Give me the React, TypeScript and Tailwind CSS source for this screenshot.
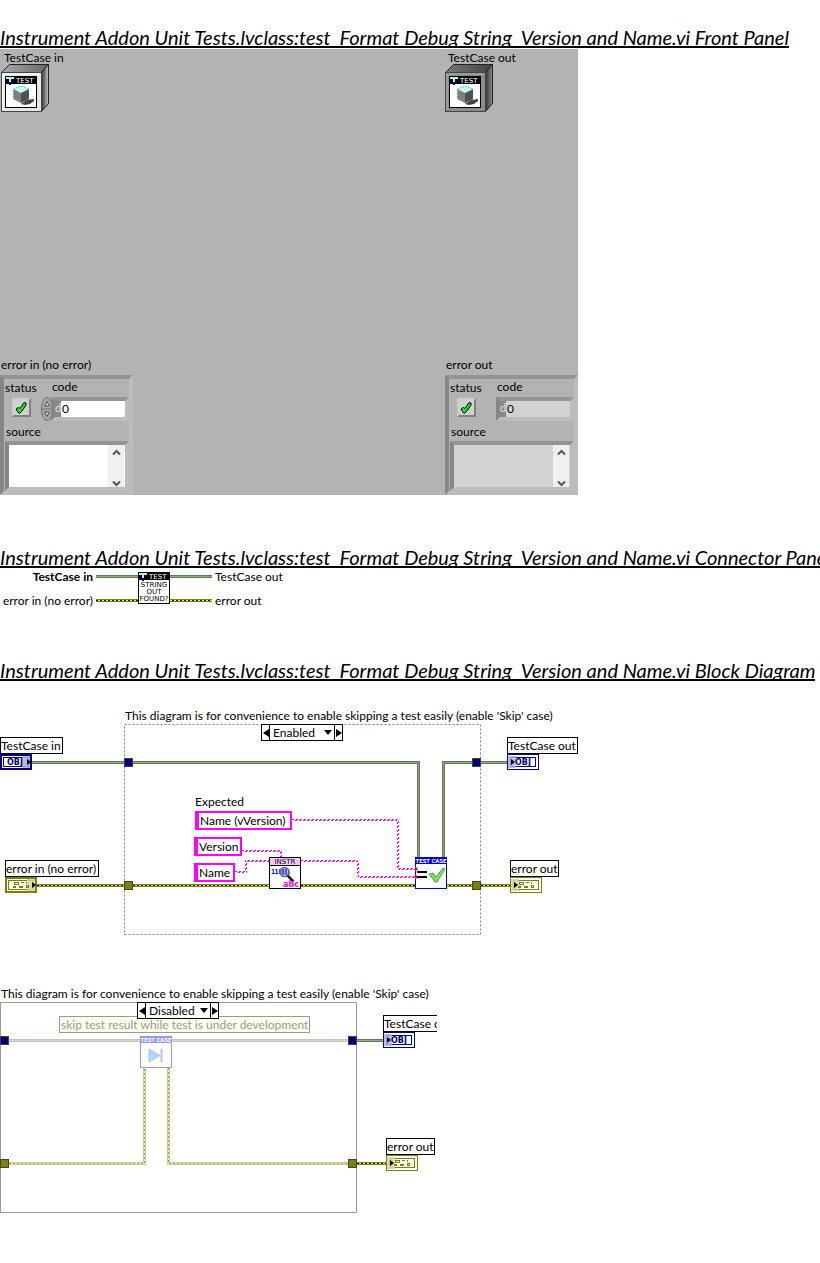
import type { ReactNode } from "react";

const NAVY = "#000080";
const OLIVE = "#808000";
const PINK = "#ff00ff";

function Heading({ children }: { children: ReactNode }) {
  return (
    <h2 className="h-6 w-fit overflow-hidden border-b-2 border-black font-[Lato,sans-serif] text-[20px] leading-[27px] whitespace-nowrap italic">
      {children}
    </h2>
  );
}

/* ---------- Icons ---------- */

function TestBanner() {
  return (
    <g>
      <rect x="0" y="0" width="32" height="8" fill="#000" />
      <path d="M1 1h8v2H6v3H4V3H1z" fill="#b4f0f8" />
      <rect x="4" y="6" width="2" height="3" fill="#0000d0" />
      <text x="11" y="7" fontSize="7" fill="#fff" fontFamily="DejaVu Sans">
        TEST
      </text>
    </g>
  );
}

function ObjectCube({ dark = false }: { dark?: boolean }) {
  const face = dark ? "#8c8c8c" : "#e6e6e6";
  const id = dark ? "cube-dark" : "cube-light";
  return (
    <svg width="48" height="48" viewBox="0 0 48 48" aria-hidden="true">
      <defs>
        <linearGradient id={`${id}-top`} x1="0" x2="1">
          <stop offset="0" stopColor={dark ? "#777" : "#aaa"} />
          <stop offset="1" stopColor={dark ? "#444" : "#666"} />
        </linearGradient>
        <linearGradient id={`${id}-side`} x1="0" x2="1">
          <stop offset="0" stopColor="#333" />
          <stop offset="1" stopColor={dark ? "#8a8a8a" : "#c4c4c4"} />
        </linearGradient>
      </defs>
      <path d="M.5 8.500 8.500.5h39l-7 8z" fill={`url(#${id}-top)`} stroke="#222" />
      <path d="M40.500 8.500l7-8v39l-7 8z" fill={`url(#${id}-side)`} stroke="#222" />
      <rect x=".5" y="8.500" width="40" height="39" fill={face} stroke="#444" />
      <path d="M2 46V10h37" fill="none" stroke={dark ? "#aaa" : "#fff"} />
      <g transform="translate(4 12)">
        <rect x=".5" y=".5" width="31" height="31" fill="#fff" stroke="#000" />
        <TestBanner />
        <path d="M16 28l6-4 7-1v2l-4 3-5 1z" fill="#444" />
        <path d="M8 13l8-3 8 3v10l-8 4-8-4z" fill="#808080" />
        <path d="M16 17l8-4v10l-8 4z" fill="#505050" />
        <path d="M8 13l8-3 8 3-8 4z" fill="#c0fafa" />
        <path d="M8.500 23V13L16 10l7.500 3" fill="none" stroke="#78c8d0" strokeDasharray="2 1" />
      </g>
    </svg>
  );
}

function StringOutIcon() {
  return (
    <g>
      <rect x=".5" y=".5" width="31" height="31" fill="#fff" stroke="#000" />
      <TestBanner />
      <g fontSize="7" textAnchor="middle" fontFamily="DejaVu Sans" fill="#000">
        <text x="16" y="15">STRING</text>
        <text x="16" y="22">OUT</text>
        <text x="16" y="29">FOUND?</text>
      </g>
    </g>
  );
}

function InstrIcon() {
  return (
    <g>
      <rect x=".5" y=".5" width="31" height="31" fill="#fff" stroke="#000" />
      <rect x="1" y="1" width="30" height="7" fill="#ffc8ff" />
      <rect x="1" y="8" width="30" height="1" fill="#000" />
      <text x="16" y="7" fontSize="7" textAnchor="middle" fontFamily="DejaVu Sans">INSTR</text>
      <text x="2" y="17" fontSize="7" fill="#0000e0" fontFamily="Liberation Sans" fontWeight="bold">11001</text>
      <circle cx="15.500" cy="15" r="4.500" fill="#a0b4f0" fillOpacity=".6" stroke="#666" strokeWidth="1.500" />
      <path d="M14 12v6M17 12v6" stroke="#0000ff" />
      <path d="M18.500 18.500l6 6" stroke="#222" strokeWidth="2.500" />
      <text x="14" y="30" fontSize="8" fontWeight="bold" fill={PINK} fontFamily="DejaVu Sans">abc</text>
    </g>
  );
}

function TestCaseFrame() {
  return (
    <g>
      <rect x=".5" y=".5" width="31" height="31" fill="#fff" stroke="#0000c0" />
      <rect width="32" height="7" fill="#0000c0" />
      <text x="16" y="6" fontSize="6" fontWeight="bold" textAnchor="middle" fill="#fff" fontFamily="Roboto">
        TEST CASE
      </text>
    </g>
  );
}

function AssertIcon() {
  return (
    <g>
      <TestCaseFrame />
      <path d="M0 9l3 3-3 3zM0 17l3 3-3 3z" fill="#f00" />
      <path d="M2 15h10M2 20h10" stroke="#000" strokeWidth="2" />
      <path d="M14 17l4-1 3 4 7-9 2 1-8 13h-2z" fill="#7be05a" stroke="#3c8c3c" strokeWidth=".8" />
    </g>
  );
}

function SkipIcon() {
  return (
    <g opacity=".4">
      <TestCaseFrame />
      <path d="M9 13l11 6.500L9 26z" fill="#3c9cf8" stroke="#2878d0" />
      <path d="M21.500 13v13" stroke="#2878d0" strokeWidth="2" />
    </g>
  );
}

/* ---------- Wires, tunnels and terminals ---------- */

function ClassWire({ d, faded }: { d: string; faded?: boolean }) {
  return (
    <g fill="none" opacity={faded ? 0.4 : 1}>
      <path d={d} stroke="#587c58" strokeWidth="3" />
      <path d={d} stroke="#98a880" strokeWidth="1" />
    </g>
  );
}

function ErrorWire({ d, faded }: { d: string; faded?: boolean }) {
  return (
    <g fill="none" opacity={faded ? 0.4 : 1}>
      <path d={d} stroke={OLIVE} strokeWidth="3" />
      <path d={d} stroke="#ffff00" strokeWidth="1" />
      <path d={d} stroke="#000" strokeWidth="1" strokeDasharray="2 2" />
    </g>
  );
}

function StringWire({ d }: { d: string }) {
  return (
    <g fill="none" stroke={PINK} strokeDasharray="2 2">
      <path d={d} />
      <path d={d} strokeDashoffset="2" transform="translate(1 1)" />
    </g>
  );
}

function Tunnel({ x, y, fill }: { x: number; y: number; fill: string }) {
  return <rect x={x + 0.5} y={y + 0.5} width="8" height="8" fill={fill} stroke="#444434" />;
}

function Terminal({ x, y, kind, input }: { x: number; y: number; kind: "obj" | "error"; input?: boolean }) {
  const color = kind === "obj" ? NAVY : OLIVE;
  const tint = kind === "obj" ? "#b0b0dc" : "#d4d4a8";
  return (
    <g transform={`translate(${x} ${y})`}>
      <rect width="32" height="16" fill={color} />
      {input ? (
        <rect x="2" y="2" width="28" height="12" fill="#fff" />
      ) : (
        <rect x="1" y="1" width="30" height="14" fill="#fff" />
      )}
      <rect x="3.500" y="3.500" width="25" height="9" fill="none" stroke={color} />
      <rect x={input ? 22 : 1} y="2" width="8" height="12" fill={tint} fillOpacity=".85" />
      {kind === "obj" ? (
        <text x={input ? 7 : 8} y="11" fontSize="8" fontWeight="bold" fill={color} fontFamily="DejaVu Sans">
          OBJ
        </text>
      ) : (
        <g fill="none" stroke={color}>
          <rect x="9.500" y="5.500" width="4" height="2" />
          <path d="M16 5.500h3M21.500 5v2M8 9.500h3M8 10.500h3M14 9.500h4M14 10.500h4" />
          <rect x="21.500" y="8.500" width="2" height="2" />
        </g>
      )}
      <path d={input ? "M27 5v6l4-3z" : "M4 5v6l4-3z"} fill="#000" />
    </g>
  );
}

/* ---------- Front panel ---------- */

function StatusLight({ id }: { id: string }) {
  return (
    <span className="relative ml-[7px] block size-[19px]">
      <input
        id={id}
        type="checkbox"
        defaultChecked
        className="block size-[19px] appearance-none border-2 border-t-[#cccccc] border-r-[#808080] border-b-[#808080] border-l-[#cccccc] bg-[#d0d0d0]"
      />
      <svg className="pointer-events-none absolute inset-0" width="19" height="19" viewBox="0 0 19 19" aria-hidden="true">
        <path d="M4.500 10.500l2-1 1.500 1 4-6 2 .5v2l-4 6-2 2h-1.500l-2-3z" fill="#00f000" stroke="#000" />
      </svg>
    </span>
  );
}

function Spinner() {
  return (
    <svg width="12" height="24" viewBox="0 0 12 24" aria-hidden="true">
      <ellipse cx="6" cy="12" rx="5.500" ry="11.500" fill="#a8a8a8" stroke="#707070" />
      <path d="M1 12h10" stroke="#707070" />
      <path d="M3.500 9L6 4.500 8.500 9zM3.500 15L6 19.500 8.500 15z" fill="#d4d4d4" stroke="#505050" />
    </svg>
  );
}

const bevel =
  "border-4 border-t-[#949494] border-l-[#868686] border-r-[#bcbcbc] border-b-[#bcbcbc]";

function ErrorCluster({ id, title, input }: { id: string; title: string; input?: boolean }) {
  const field = input ? "bg-white" : "bg-[#d2d2d2]";
  return (
    <fieldset className="w-[133px]">
      <legend className="h-[18px] pl-px leading-4">{title}</legend>
      <div className={`${bevel} pl-px`}>
        <div className="flex">
          <div className="w-9">
            <label htmlFor={`${id}-status`} className="block h-[19px] leading-[18px]">
              status
            </label>
            <StatusLight id={`${id}-status`} />
          </div>
          <div className="flex-1">
            <label htmlFor={`${id}-code`} className="block h-[18px] pl-[11px] leading-4">
              code
            </label>
            <div className="flex h-6 items-center">
              <div className="w-[10px] flex-none">{input && <Spinner />}</div>
              <div className={`${bevel} flex h-6 flex-1`}>
                <span className="w-[6px] flex-none bg-[#888888] text-[11px] leading-[14px] text-[#e0e0e0]">d</span>
                <input
                  id={`${id}-code`}
                  defaultValue="0"
                  readOnly={!input}
                  className={`${field} h-4 w-0 flex-1 pb-[2px] pl-px leading-[14px] outline-none`}
                />
              </div>
            </div>
          </div>
        </div>
        <label htmlFor={`${id}-source`} className="block h-5 pl-px leading-[22px]">
          source
        </label>
        <div className={`${bevel} flex h-[50px]`}>
          <textarea
            id={`${id}-source`}
            readOnly={!input}
            className={`${field} w-0 flex-1 resize-none outline-none`}
          />
          <div className={`flex ${field} pr-px`}>
            <div className="flex w-4 flex-col items-center justify-between bg-[#f0f0f0] pt-1">
              <svg width="9" height="7" viewBox="0 0 9 7" aria-hidden="true">
                <path d="M1 5.500l3.500-3.500L8 5.500" fill="none" stroke="#555" strokeWidth="2" />
              </svg>
              <svg width="9" height="7" viewBox="0 0 9 7" aria-hidden="true">
                <path d="M1 1.500l3.500 3.500L8 1.500" fill="none" stroke="#555" strokeWidth="2" />
              </svg>
            </div>
          </div>
        </div>
      </div>
    </fieldset>
  );
}

function FrontPanel() {
  return (
    <div className="mt-px flex min-h-[446px] w-full max-w-[578px] flex-col justify-between bg-[#b3b3b3]">
      <div className="flex justify-between pt-px">
        <figure className="w-[132px] pl-px">
          <figcaption className="h-[14px] pl-[3px] leading-4">TestCase in</figcaption>
          <ObjectCube />
        </figure>
        <figure className="w-[133px]">
          <figcaption className="h-[14px] pl-[3px] leading-4">TestCase out</figcaption>
          <ObjectCube dark />
        </figure>
      </div>
      <div className="flex justify-between">
        <ErrorCluster id="error-in" title="error in (no error)" input />
        <ErrorCluster id="error-out" title="error out" />
      </div>
    </div>
  );
}

/* ---------- Connector pane ---------- */

function ConnectorPane() {
  return (
    <div className="mt-px flex h-10 items-center gap-[3px]">
      <div className="flex w-[93px] flex-col items-end gap-2 leading-4 whitespace-nowrap">
        <b>TestCase in</b>
        <span>error in (no error)</span>
      </div>
      <svg width="116" height="34" viewBox="0 0 116 34" aria-hidden="true">
        <ClassWire d="M0 4.500H116" />
        <ErrorWire d="M0 28.500H116" />
        <g transform="translate(42 0)">
          <StringOutIcon />
        </g>
      </svg>
      <div className="flex flex-col gap-2 leading-4">
        <span>TestCase out</span>
        <span>error out</span>
      </div>
    </div>
  );
}

/* ---------- Block diagram ---------- */

function CaseSelector({ value, other, className }: { value: string; other: string; className: string }) {
  return (
    <div className={`absolute flex h-[17px] w-[82px] border border-black bg-white ${className}`}>
      <button type="button" aria-label="Previous case" className="flex w-2 items-center justify-center border-r border-black">
        <svg width="6" height="8" viewBox="0 0 6 8"><path d="M6 0v8L0 4z" /></svg>
      </button>
      <div className="relative flex-1">
        <select aria-label="Case" defaultValue={value} className="block h-[15px] w-full appearance-none pl-[3px] leading-[15px] outline-none">
          <option>{value}</option>
          <option>{other}</option>
        </select>
        <svg className="pointer-events-none absolute top-[5px] right-[2px]" width="8" height="5" viewBox="0 0 8 5">
          <path d="M0 0h8L4 5z" />
        </svg>
      </div>
      <button type="button" aria-label="Next case" className="flex w-2 items-center justify-center border-l border-black">
        <svg width="6" height="8" viewBox="0 0 6 8"><path d="M0 0v8l6-4z" /></svg>
      </button>
    </div>
  );
}

function NodeLabel({ className, children }: { className: string; children: ReactNode }) {
  return (
    <span className={`absolute h-[17px] border border-black bg-white leading-[15px] whitespace-nowrap ${className}`}>
      {children}
    </span>
  );
}

function StringConstant({ className, children }: { className: string; children: ReactNode }) {
  return (
    <span className={`absolute h-[19px] border-2 border-l-4 border-[#ff00ff] bg-white pl-px leading-[15px] whitespace-nowrap ${className}`}>
      {children}
    </span>
  );
}

const skipNote = "This diagram is for convenience to enable skipping a test easily (enable 'Skip' case)";

function EnabledDiagram() {
  return (
    <div className="relative mt-[27px] h-[228px] w-[580px]">
      <svg className="block" width="580" height="228" viewBox="0 708 580 228" aria-hidden="true">
        <rect x="124.500" y="724.500" width="356" height="210" fill="none" stroke="#808080" strokeDasharray="2 2" />
        <ClassWire d="M32 762.500H418.500V858" />
        <ClassWire d="M443.500 858V762.500H507" />
        <ErrorWire d="M37 885.500H510" />
        <StringWire d="M292 819.500H397.500V868.500H415" />
        <StringWire d="M242 850.500H280.500V857" />
        <StringWire d="M235 871.500H245.500V860.500H269" />
        <StringWire d="M301 860.500H357.500V876.500H415" />
        <Tunnel x={124} y={758} fill={NAVY} />
        <Tunnel x={472} y={758} fill={NAVY} />
        <Tunnel x={124} y={881} fill={OLIVE} />
        <Tunnel x={472} y={881} fill={OLIVE} />
        <Terminal x={0} y={754} kind="obj" input />
        <Terminal x={507} y={754} kind="obj" />
        <Terminal x={5} y={877} kind="error" input />
        <Terminal x={510} y={877} kind="error" />
        <g transform="translate(269 857)"><InstrIcon /></g>
        <g transform="translate(415 857)"><AssertIcon /></g>
      </svg>
      <span className="absolute top-0 left-[125px] leading-4 whitespace-nowrap">{skipNote}</span>
      <CaseSelector value="Enabled" other="Disabled" className="top-[16px] left-[261px]" />
      <NodeLabel className="top-[29px] left-0 w-[63px]">TestCase in</NodeLabel>
      <NodeLabel className="top-[29px] left-[507px] w-[71px]">TestCase out</NodeLabel>
      <NodeLabel className="top-[152px] left-[5px] w-[94px]">error in (no error)</NodeLabel>
      <NodeLabel className="top-[152px] left-[510px] w-[49px]">error out</NodeLabel>
      <span className="absolute top-[86px] left-[195px] leading-4">Expected</span>
      <StringConstant className="top-[103px] left-[195px] w-[97px]">Name (vVersion)</StringConstant>
      <StringConstant className="top-[129px] left-[194px] w-[48px]">Version</StringConstant>
      <StringConstant className="top-[155px] left-[194px] w-[41px]">Name</StringConstant>
    </div>
  );
}

function DisabledDiagram() {
  return (
    <div className="relative mt-[50px] h-[228px] w-[437px] overflow-hidden">
      <svg className="block" width="437" height="228" viewBox="0 986 437 228" aria-hidden="true">
        <rect x=".5" y="1002.500" width="356" height="210" fill="none" stroke="#999" />
        <ClassWire d="M9 1040.500H348" faded />
        <ClassWire d="M357 1040.500H383" />
        <ErrorWire d="M9 1163.500H144.500V1068" faded />
        <ErrorWire d="M168.500 1068V1163.500H348" faded />
        <ErrorWire d="M357 1163.500H386" />
        <Tunnel x={0} y={1036} fill={NAVY} />
        <Tunnel x={348} y={1036} fill={NAVY} />
        <Tunnel x={0} y={1159} fill={OLIVE} />
        <Tunnel x={348} y={1159} fill={OLIVE} />
        <Terminal x={383} y={1032} kind="obj" />
        <Terminal x={386} y={1155} kind="error" />
        <rect x="140" y="1036" width="32" height="32" fill="#fff" />
        <g transform="translate(140 1036)"><SkipIcon /></g>
      </svg>
      <span className="absolute top-0 left-px leading-4 whitespace-nowrap">{skipNote}</span>
      <span className="absolute top-[30px] left-[59px] h-[17px] w-[251px] border border-[#999999] bg-[#ffffeb] pl-px leading-[15px] whitespace-nowrap text-[#999999]">
        skip test result while test is under development
      </span>
      <CaseSelector value="Disabled" other="Enabled" className="top-[16px] left-[137px]" />
      <NodeLabel className="top-[29px] left-[383px] w-[71px]">TestCase out</NodeLabel>
      <NodeLabel className="top-[152px] left-[386px] w-[49px]">error out</NodeLabel>
    </div>
  );
}

const viName = "Instrument Addon Unit Tests.lvclass:test_Format Debug String_Version and Name.vi";

export default function App() {
  return (
    <main className="overflow-x-hidden bg-white pt-6 pb-[49px] font-[Lato,sans-serif] text-[12px] text-black">
      <section>
        <Heading>{viName} Front Panel</Heading>
        <FrontPanel />
      </section>
      <section className="mt-[49px]">
        <Heading>{viName} Connector Pane</Heading>
        <ConnectorPane />
      </section>
      <section className="mt-12">
        <Heading>{viName} Block Diagram</Heading>
        <EnabledDiagram />
        <DisabledDiagram />
      </section>
    </main>
  );
}
